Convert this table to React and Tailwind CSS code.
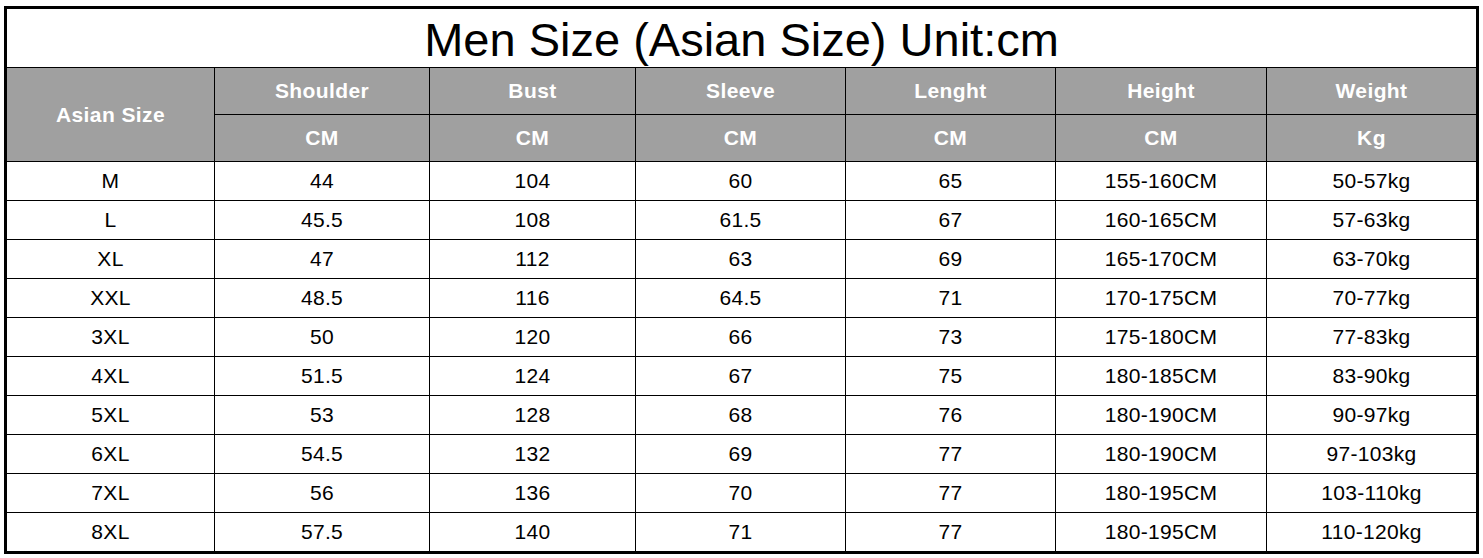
import React from "react";

const rows = [
  ["M", "44", "104", "60", "65", "155-160CM", "50-57kg"],
  ["L", "45.5", "108", "61.5", "67", "160-165CM", "57-63kg"],
  ["XL", "47", "112", "63", "69", "165-170CM", "63-70kg"],
  ["XXL", "48.5", "116", "64.5", "71", "170-175CM", "70-77kg"],
  ["3XL", "50", "120", "66", "73", "175-180CM", "77-83kg"],
  ["4XL", "51.5", "124", "67", "75", "180-185CM", "83-90kg"],
  ["5XL", "53", "128", "68", "76", "180-190CM", "90-97kg"],
  ["6XL", "54.5", "132", "69", "77", "180-190CM", "97-103kg"],
  ["7XL", "56", "136", "70", "77", "180-195CM", "103-110kg"],
  ["8XL", "57.5", "140", "71", "77", "180-195CM", "110-120kg"],
];

const heads = ["Shoulder", "Bust", "Sleeve", "Lenght", "Height", "Weight"];
const units = ["CM", "CM", "CM", "CM", "CM", "Kg"];

export default function App() {
  return (
    <div className="w-[1483px] h-[558px] bg-white pl-[4px] pt-[6px] font-['Liberation_Sans',Arial,sans-serif]">
      <div className="w-[1475px] border-[3px] border-black bg-black">
        <div className="h-[58px] bg-white flex items-center justify-center text-[47px] text-black leading-none pt-[3px]">
          Men Size (Asian Size) Unit:cm
        </div>
        <div className="grid grid-cols-[207px_214px_205px_209px_209px_210px_209px] grid-rows-[46px_46px_repeat(10,38px)] gap-px pt-px bg-black">
          <div className="row-span-2 bg-[#a0a0a0] text-white font-bold text-[21px] tracking-[0.4px] flex items-center justify-center">
            Asian Size
          </div>
          {heads.map((h) => (
            <div key={h} className="bg-[#a0a0a0] text-white font-bold text-[21px] tracking-[0.4px] flex items-center justify-center">
              {h}
            </div>
          ))}
          {units.map((u, i) => (
            <div key={i} className="bg-[#a0a0a0] text-white font-bold text-[21px] tracking-[0.4px] flex items-center justify-center">
              {u}
            </div>
          ))}
          {rows.map((r, i) =>
            r.map((c, j) => (
              <div key={i + "-" + j} className="bg-white text-black text-[21px] tracking-[0.3px] flex items-center justify-center">
                {c}
              </div>
            ))
          )}
        </div>
      </div>
    </div>
  );
}
